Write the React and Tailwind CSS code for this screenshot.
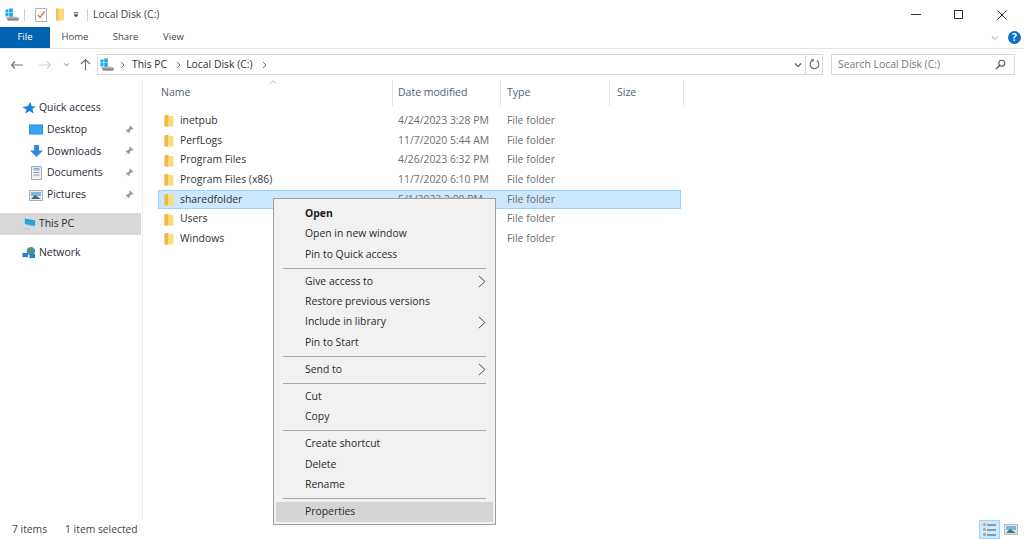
import React from 'react';

const files = [
  { name: 'inetpub', date: '4/24/2023 3:28 PM' },
  { name: 'PerfLogs', date: '11/7/2020 5:44 AM' },
  { name: 'Program Files', date: '4/26/2023 6:32 PM' },
  { name: 'Program Files (x86)', date: '11/7/2020 6:10 PM' },
  { name: 'sharedfolder', date: '5/1/2023 2:00 PM', selected: true },
  { name: 'Users', date: '' },
  { name: 'Windows', date: '' },
];

const menu = [
  [{ label: 'Open', bold: true }, { label: 'Open in new window' }, { label: 'Pin to Quick access' }],
  [{ label: 'Give access to', arrow: true }, { label: 'Restore previous versions' }, { label: 'Include in library', arrow: true }, { label: 'Pin to Start' }],
  [{ label: 'Send to', arrow: true }],
  [{ label: 'Cut' }, { label: 'Copy' }],
  [{ label: 'Create shortcut' }, { label: 'Delete' }, { label: 'Rename' }],
  [{ label: 'Properties', active: true }],
];

const Folder = () => (
  <svg width="10" height="13" viewBox="0 0 10 13" className="shrink-0">
    <path d="M0.5 1.5 L5 0.5 L5 2 L9.5 2 L9.5 12.5 L0.5 12.5 Z" fill="#fddc7d" />
    <path d="M0.5 1.5 L4 0.8 L4 12.5 L0.5 12.5 Z" fill="#eeb947" />
  </svg>
);

const Drive = () => (
  <svg width="15" height="13" viewBox="0 0 15 13">
    <path d="M0.5 8.5 L10 8.5 L14.5 10 L13 12.5 L3 12.5 Z" fill="#b4b9bd" />
    <path d="M2 10.5 L14 10.5 L13 12.5 L3 12.5 Z" fill="#80868a" />
    <rect x="0.5" y="1.5" width="3" height="3" fill="#19a3ea" />
    <rect x="4.2" y="0.5" width="3.6" height="4" fill="#19a3ea" />
    <rect x="0.5" y="5" width="3" height="3" fill="#19a3ea" />
    <rect x="4.2" y="5" width="3.6" height="3.6" fill="#19a3ea" />
  </svg>
);

const Pin = () => (
  <svg width="10" height="10" viewBox="0 0 10 10">
    <path d="M6 0.5 L9.5 4 L8.5 4.6 L7.4 4.2 L5.6 6 L5.6 7.6 L4.8 8 L2 5.2 L2.4 4.4 L4 4.4 L5.8 2.6 L5.4 1.5 Z" fill="#8f979c" />
    <path d="M3 6.6 L0.8 9.2 L3.4 7 Z" fill="#8f979c" />
  </svg>
);

const Caret = ({ size = 6, color = '#777' }) => (
  <svg width={size + 2} height={size} viewBox="0 0 8 6">
    <path d="M1 1.5 L4 4.5 L7 1.5" fill="none" stroke={color} strokeWidth="1.1" />
  </svg>
);

const Crumb = () => (
  <svg width="5" height="8" viewBox="0 0 5 8" className="shrink-0">
    <path d="M1 1 L4 4 L1 7" fill="none" stroke="#777" strokeWidth="1" />
  </svg>
);

const NavItem = ({ icon, label, pin, active, indent }) => (
  <div className={`flex items-center ${indent ? 'pl-[29px] gap-[4px]' : 'pl-[22px] gap-[3px]'} pr-[3px] ${active ? 'bg-[#d9d9d9] h-[22px]' : 'h-[21.8px]'}`}>
    <span className="w-[14px] flex justify-center shrink-0">{icon}</span>
    <span className="text-[#1f2a3a] flex-1">{label}</span>
    {pin && <span className="mr-[4px]"><Pin /></span>}
  </div>
);

export default function App() {
  return (
    <div className="relative w-screen h-screen overflow-hidden bg-white flex flex-col text-[10.4px] text-[#333] font-['Open_Sans',sans-serif]">
      {/* title bar */}
      <div className="h-[27px] flex items-center shrink-0 pt-[2px]">
        <span className="ml-[5px] flex"><Drive /></span>
        <span className="ml-[4px] w-px h-[12px] bg-[#ccc]" />
        <svg width="12" height="14" viewBox="0 0 12 14" className="ml-[10px]">
          <path d="M0.5 0.5 H11.5 V13.5 H0.5 Z" fill="#fff" stroke="#aeb3b8" />
          <path d="M3 7 L5.2 9.5 L9.5 3.5" fill="none" stroke="#e8703a" strokeWidth="1.3" />
        </svg>
        <span className="ml-[9px] flex"><svg width="8" height="13" viewBox="0 0 8 13"><path d="M0 0.5 L8 0.5 L8 12.5 L0 12.5 Z" fill="#fddc7d" /><path d="M0 0.5 L2.5 0.5 L2.5 12.5 L0 12.5 Z" fill="#f2c24d" /></svg></span>
        <svg width="6" height="6" viewBox="0 0 7 6" className="ml-[9px]">
          <rect x="1" y="0" width="5" height="1" fill="#333" />
          <path d="M0.5 2.5 H6.5 L3.5 5.5 Z" fill="#333" />
        </svg>
        <span className="ml-[8px] w-px h-[12px] bg-[#ccc]" />
        <span className="ml-[5px] text-[#444]">Local Disk (C:)</span>
        <div className="ml-auto flex items-center">
          <div className="w-[42px] flex justify-center"><span className="w-[10px] h-px bg-[#333]" /></div>
          <div className="w-[43px] flex justify-center"><span className="w-[9px] h-[9px] border border-[#333]" /></div>
          <div className="w-[44px] flex justify-center">
            <svg width="10" height="10" viewBox="0 0 10 10"><path d="M0.5 0.5 L9.5 9.5 M9.5 0.5 L0.5 9.5" stroke="#333" strokeWidth="1" /></svg>
          </div>
        </div>
      </div>

      {/* ribbon tabs */}
      <div className="h-[22px] flex items-stretch border-b border-[#e3e3e3] shrink-0 text-[9.5px]">
        <div className="w-[50px] bg-[#0063b1] text-white flex items-center justify-center">File</div>
        <div className="flex items-center text-[#444]">
          <span className="w-[50px] text-center">Home</span>
          <span className="w-[51px] text-center">Share</span>
          <span className="w-[45px] text-center">View</span>
        </div>
        <div className="ml-auto flex items-center pr-[3px] gap-[9px]">
          <Caret size={6} color="#c4c4c4" />
          <span className="w-[13px] h-[13px] rounded-full bg-[#0f6fc6] text-white text-[10px] font-bold flex items-center justify-center">?</span>
        </div>
      </div>

      {/* address row */}
      <div className="h-[31px] flex items-center shrink-0">
        <svg width="14" height="10" viewBox="0 0 14 10" className="ml-[10px]">
          <path d="M13 5 H1.5 M5 1.5 L1.5 5 L5 8.5" fill="none" stroke="#6f6f6f" strokeWidth="1.1" />
        </svg>
        <svg width="14" height="10" viewBox="0 0 14 10" className="ml-[14px]">
          <path d="M1 5 H12.5 M9 1.5 L12.5 5 L9 8.5" fill="none" stroke="#cfcfcf" strokeWidth="1.1" />
        </svg>
        <span className="ml-[11px] flex"><Caret size={5} color="#777" /></span>
        <svg width="11" height="13" viewBox="0 0 11 13" className="ml-[10px]">
          <path d="M5.5 12.5 V1.5 M1 6 L5.5 1.5 L10 6" fill="none" stroke="#6f6f6f" strokeWidth="1.1" />
        </svg>
        <div className="ml-[6px] w-[726px] h-[21px] border border-[#d9d9d9] flex items-center">
          <span className="ml-[2px] flex"><Drive /></span>
          <span className="ml-[5px] flex"><Crumb /></span>
          <span className="ml-[7px]">This PC</span>
          <span className="ml-[9px] flex"><Crumb /></span>
          <span className="ml-[5px]">Local Disk (C:)</span>
          <span className="ml-[9px] flex"><Crumb /></span>
          <div className="ml-auto flex items-center h-full">
            <span className="mr-[3px] flex"><Caret size={6} color="#555" /></span>
            <div className="h-full w-[17px] border-l border-[#d9d9d9] flex items-center justify-center">
              <svg width="11" height="11" viewBox="0 0 11 11"><path d="M7 1.2 A4.4 4.4 0 1 1 3.5 1.4 M3.5 0 V3 M3.5 1.4 L1.5 1.4" fill="none" stroke="#666" strokeWidth="1.1" transform="rotate(10 5.5 5.5)" /></svg>
            </div>
          </div>
        </div>
        <div className="ml-[8px] w-[184px] h-[21px] border border-[#d9d9d9] flex items-center pl-[6px] pr-[8px] text-[#777]">
          <span className="flex-1">Search Local Disk (C:)</span>
          <svg width="11" height="11" viewBox="0 0 11 11"><circle cx="6.8" cy="4.2" r="3" fill="none" stroke="#555" strokeWidth="1.1" /><path d="M4.6 6.4 L1 10" stroke="#555" strokeWidth="1.4" /></svg>
        </div>
      </div>

      {/* main */}
      <div className="flex-1 flex min-h-0">
        <div className="w-[143px] shrink-0 border-r border-[#f0f0f0] pt-[17px] pr-px">
          <NavItem label="Quick access" icon={<svg width="15" height="14" viewBox="0 0 15 14"><path d="M9 0.5 L10.4 5 L14.8 5 L11.2 8 L12.4 13 L8 10.2 L3.2 13.2 L4.8 8.6 L0.3 6 L6 5 Z" fill="#1f7fd8" /></svg>} />
          <NavItem indent pin label="Desktop" icon={<svg width="14" height="11" viewBox="0 0 14 11"><rect x="0" y="0.5" width="14" height="10" fill="#1e8ee6" /><rect x="1" y="1.5" width="12" height="8" fill="#38a6f0" /></svg>} />
          <NavItem indent pin label="Downloads" icon={<svg width="13" height="12" viewBox="0 0 13 12"><path d="M4 0 H9 V5.5 H13 L6.5 12 L0 5.5 H4 Z" fill="#2f8ae0" /></svg>} />
          <NavItem indent pin label="Documents" icon={<svg width="11" height="14" viewBox="0 0 11 14"><path d="M0.5 0.5 H10.5 V13.5 H0.5 Z" fill="#eef1f4" stroke="#a4adb5" /><path d="M2.5 4 H8.5 M2.5 6.5 H8.5 M2.5 9 H8.5" stroke="#8e99a3" /><rect x="2.5" y="1.8" width="6" height="1.6" fill="#7fb3dd" /></svg>} />
          <NavItem indent pin label="Pictures" icon={<svg width="14" height="11" viewBox="0 0 14 11"><rect x="0.5" y="0.5" width="13" height="10" fill="#e8edf1" stroke="#a7b0b8" /><rect x="2" y="2" width="10" height="4" fill="#7cb7e4" /><path d="M2 9 L6 5 L12 9 Z" fill="#4d6b57" /></svg>} />
          <div className="h-[7px]" />
          <NavItem active label="This PC" icon={<svg width="15" height="14" viewBox="0 0 15 14"><path d="M3 1 L14 3 V9 L3 7 Z" fill="#2c9fd8" /><path d="M4 7.5 L13 9.2" stroke="#5fbce8" /><path d="M1 11 L9 13" stroke="#c9c9c9" strokeWidth="1.4" /></svg>} />
          <div className="h-[7px]" />
          <NavItem label="Network" icon={<svg width="15" height="14" viewBox="0 0 15 14"><circle cx="9.5" cy="5" r="4.5" fill="#2f97d4" /><path d="M7 2 L11 1 L13 5 L9 8 Z" fill="#6c8f3d" /><rect x="0.5" y="7" width="6" height="4.5" fill="#2a83c4" /><rect x="8" y="8" width="6" height="4.5" fill="#2a83c4" /></svg>} />
        </div>

        <div className="flex-1 pl-[15px] min-w-0">
          <div className="relative w-[526px] h-[26px] flex items-center text-[#4c607a] text-[10.5px]">
            <div className="w-[235px] h-full border-r border-[#e5e5e5] flex items-center pl-[3px]">Name</div>
            <div className="w-[108px] h-full border-r border-[#e5e5e5] flex items-center pl-[5px]">Date modified</div>
            <div className="w-[109px] h-full border-r border-[#e5e5e5] flex items-center pl-[6px]">Type</div>
            <div className="w-[74px] h-full border-r border-[#e5e5e5] flex items-center pl-[7px]">Size</div>
            <svg width="8" height="5" viewBox="0 0 8 5" className="absolute left-[111px] top-0"><path d="M0.5 4 L4 0.8 L7.5 4" fill="none" stroke="#b5b5b5" strokeWidth="1" /></svg>
          </div>
          <div className="pt-[5px]">
            {files.map((f) => (
              <div key={f.name} className={`w-[523px] h-[19.7px] flex items-center border ${f.selected ? 'bg-[#cce8ff] border-[#99d1ff]' : 'border-transparent'}`}>
                <div className="w-[235px] flex items-center pl-[5px] gap-[6px]">
                  <Folder />
                  <span className="text-[#333]">{f.name}</span>
                </div>
                <div className="w-[109px] pl-[4px] text-[#6d6d6d]">{f.date}</div>
                <div className="pl-[4px] text-[#6d6d6d]">File folder</div>
              </div>
            ))}
          </div>
        </div>
      </div>

      {/* status bar */}
      <div className="h-[19px] shrink-0 flex items-center pl-[12px] text-[#444] text-[10.3px]">
        <span>7 items</span>
        <span className="ml-[18px]">1 item selected</span>
        <div className="ml-auto flex items-center mr-[6px]">
          <div className="w-[21px] h-[19px] bg-[#cce8ff] border border-[#99d1ff] flex flex-col justify-center gap-[2px] pl-[3px]">
            {['#c9a58e', '#a9b58f', '#b3a4a0'].map((c) => (
              <div key={c} className="flex items-center gap-[1px]">
                <span className="w-[3px] h-[3px] rounded-[1px]" style={{ backgroundColor: c }} />
                <span className="w-[9px] h-[2px] bg-[#8a9aa6]" />
              </div>
            ))}
          </div>
          <div className="w-[18px] flex justify-end">
            <svg width="14" height="11" viewBox="0 0 14 11"><rect x="0.5" y="0.5" width="13" height="10" fill="#dfe5ea" stroke="#b4bcc2" /><rect x="2" y="2" width="10" height="4" fill="#7cb7e4" /><path d="M2 9 L6 5 L12 9 Z" fill="#4d7a64" /></svg>
          </div>
        </div>
      </div>

      {/* context menu */}
      <div className="absolute left-[273px] top-[198px] w-[223px] h-[327px] bg-[#f1f1f1] border border-[#a0a0a0] pt-[4.6px] px-[2px] text-[#2b2b2b]">
        {menu.map((group, i) => (
          <div key={i}>
            {i > 0 && (
              <div className="h-[6.75px] flex items-center px-[7px]">
                <div className="w-full h-px bg-[#a8a8a8]" />
              </div>
            )}
            {group.map((item) => (
              <div key={item.label} className={`h-[20.35px] flex items-center pl-[29px] pr-[7px] ${item.active ? 'bg-[#d5d5d5]' : ''} ${item.bold ? 'font-bold text-[#1a1a1a]' : ''}`}>
                <span className="flex-1">{item.label}</span>
                {item.arrow && (
                  <svg width="8" height="13" viewBox="0 0 8 13"><path d="M0.8 0.8 L7 6.5 L0.8 12.2" fill="none" stroke="#555" strokeWidth="1" /></svg>
                )}
              </div>
            ))}
          </div>
        ))}
      </div>
    </div>
  );
}
